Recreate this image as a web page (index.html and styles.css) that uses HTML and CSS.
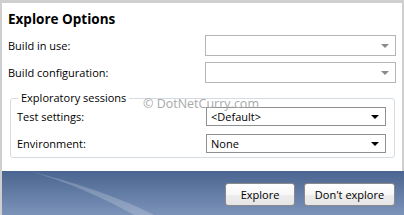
FILE: index.html
```html
<!DOCTYPE html>
<html>
<head>
<meta charset="utf-8">
<link rel="stylesheet" href="styles.css">
</head>
<body>
<div class="dialog">
  <div class="content">
    <div class="title">Explore Options</div>
    <div class="row">
      <span class="label">Build in use:</span>
      <div class="combo disabled"><span class="value"></span><span class="arrow"></span></div>
    </div>
    <div class="row">
      <span class="label">Build configuration:</span>
      <div class="combo disabled"><span class="value"></span><span class="arrow"></span></div>
    </div>
    <fieldset class="group">
      <legend>Exploratory sessions</legend>
      <div class="row inner">
        <span class="label">Test settings:</span>
        <div class="combo"><span class="value">&lt;Default&gt;</span><span class="arrow"></span></div>
      </div>
      <div class="row inner">
        <span class="label">Environment:</span>
        <div class="combo"><span class="value">None</span><span class="arrow"></span></div>
      </div>
    </fieldset>
    <div class="watermark">© DotNetCurry.com</div>
  </div>
  <div class="footer">
    <svg class="swoosh" width="400" height="44" viewBox="0 0 400 44">
      <path d="M26 0 C70 10 122 28 152 44 L132 44 C104 28 64 10 26 0 Z" fill="rgba(255,255,255,0.2)"/>
    </svg>
    <button class="btn">Explore</button>
    <button class="btn">Don't explore</button>
  </div>
</div>
</body>
</html>
```
FILE: styles.css
```css
html, body {
  margin: 0;
  padding: 0;
}
body {
  width: 404px;
  height: 215px;
  background: #cfcfcf;
  font-family: "Open Sans", "Noto Sans", sans-serif;
  font-size: 11px;
  color: #000;
  overflow: hidden;
}
.dialog {
  margin: 3px 0 0 2px;
  width: 402px;
  height: 212px;
  display: flex;
  flex-direction: column;
}
.content {
  position: relative;
  flex: 0 0 168px;
  background: #fff;
  margin-right: 2px;
  padding: 0 0 0 6px;
  box-sizing: border-box;
}
.title {
  font-weight: bold;
  font-size: 13.5px;
  height: 24px;
  line-height: 15px;
  padding-top: 9px;
  box-sizing: border-box;
}
.row {
  display: grid;
  grid-template-columns: 197px 191px;
  align-items: center;
  height: 21px;
  margin-top: 8px;
}
.row + .row {
  margin-top: 6px;
}
.combo {
  height: 21px;
  box-sizing: border-box;
  border: 1px solid #b5b5b5;
  background: #fff;
  display: flex;
  align-items: center;
  padding: 0 6px 0 4px;
}
.combo .value {
  flex: 1;
}
.combo .arrow {
  width: 0;
  height: 0;
  border-left: 4px solid transparent;
  border-right: 4px solid transparent;
  border-top: 4px solid #000;
}
.combo.disabled .arrow {
  border-top-color: #8a8a8a;
}
.group {
  margin: 9px 0 0 2px;
  width: 385px;
  height: 66px;
  box-sizing: border-box;
  border: 1px solid #d5dbe2;
  border-radius: 3px;
  padding: 0 0 0 6px;
}
.group legend {
  padding: 0 3px;
  margin-left: 1px;
  line-height: 12px;
}
.group .row {
  grid-template-columns: 189px 180px;
  height: 19px;
  margin-top: 3px;
}
.group .row + .row {
  margin-top: 8px;
}
.group .combo {
  height: 19px;
  border-color: #8e8f8f;
}
.watermark {
  position: absolute;
  left: 141px;
  top: 95px;
  color: #a9a9a9;
  font-size: 12.5px;
  line-height: 12px;
}
.footer {
  position: relative;
  flex: 1;
  background: linear-gradient(#4a6590, #7c93b9);
  display: flex;
  justify-content: flex-end;
  align-items: center;
  gap: 9px;
  padding: 2px 9px 0 0;
  overflow: hidden;
}
.swoosh {
  position: absolute;
  left: 0;
  top: 0;
}
.btn {
  position: relative;
  height: 23px;
  padding: 0;
  border: 1px solid #8a8a8a;
  border-radius: 3px;
  background: linear-gradient(#ffffff 0%, #f7f7f7 50%, #ededed 51%, #e6e6e6 100%);
  font-family: inherit;
  font-size: 11px;
  color: #000;
}
.btn:first-of-type {
  width: 70px;
}
.btn:last-of-type {
  width: 91px;
}
```
